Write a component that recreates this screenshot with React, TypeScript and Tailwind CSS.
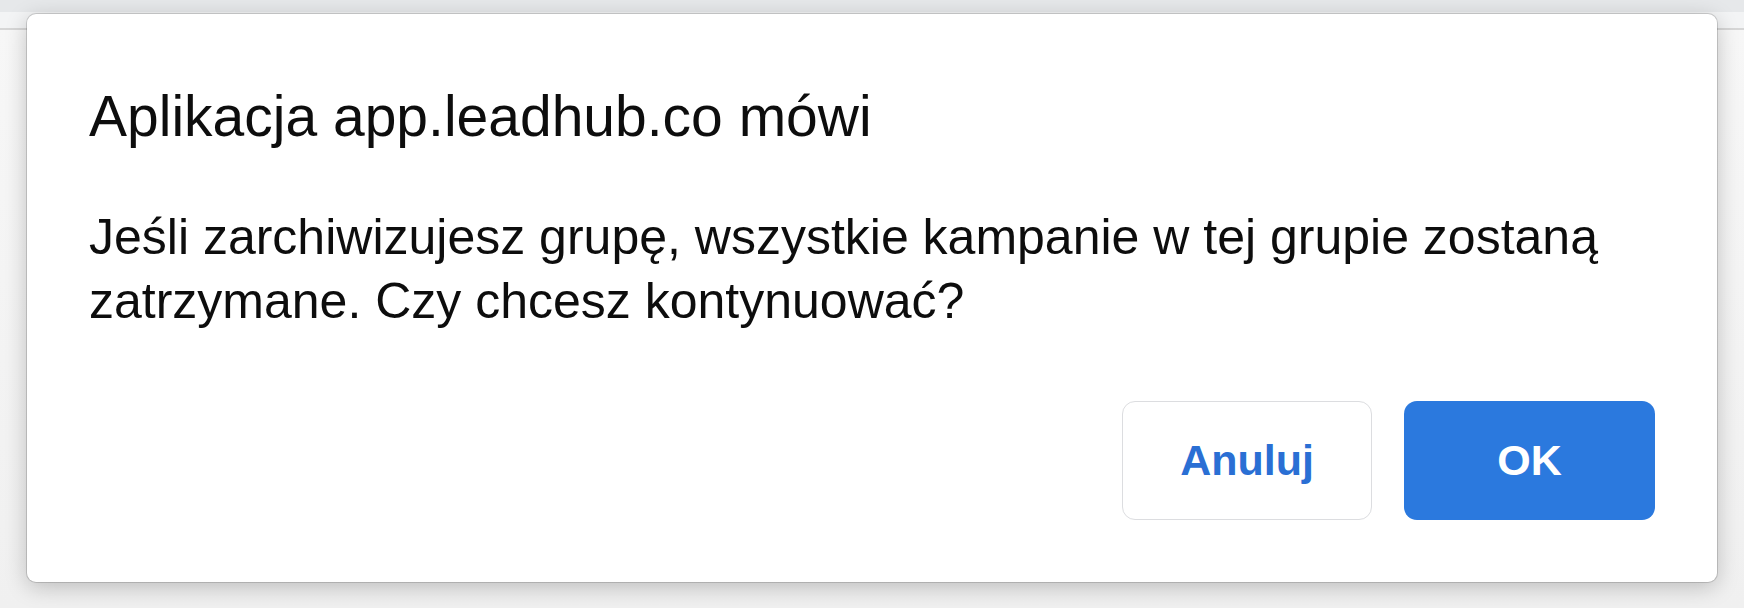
export default function App() {
  return (
    <div className="relative w-[1744px] h-[608px] overflow-hidden bg-[#f6f6f6] font-['Liberation_Sans',Arial,sans-serif]">
      {/* browser chrome behind the alert */}
      <div className="h-[12px] bg-[#e6e8ea]" />
      <div className="h-[16px] bg-[#f3f4f5]" />
      <div className="h-[2px] bg-[#d6d6d6]" />
      <div className="h-[578px] bg-gradient-to-b from-[#f7f7f7] to-[#f0f0f0]" />

      {/* alert dialog */}
      <div className="absolute left-[27px] top-[14px] w-[1690px] h-[568px] bg-white rounded-[9px] shadow-[0_0_0_1px_rgba(0,0,0,0.15),0_5px_22px_rgba(0,0,0,0.22)] flex flex-col pt-[68px] pb-[62px] px-[62px]">
        <h1 className="text-[57px] leading-[68px] text-[#0d0d0d] font-normal">
          Aplikacja app.leadhub.co mówi
        </h1>
        <p className="mt-[55px] text-[50px] leading-[64px] text-[#0d0d0d]">
          Jeśli zarchiwizujesz grupę, wszystkie kampanie w tej grupie zostaną zatrzymane. Czy chcesz kontynuować?
        </p>
        <div className="mt-auto flex justify-end gap-[32px]">
          <button className="w-[250px] h-[119px] rounded-[13px] border-[1.5px] border-[#dcdde0] bg-white text-[#2a6fd4] text-[43px] font-bold">
            Anuluj
          </button>
          <button className="w-[251px] h-[119px] rounded-[13px] bg-[#2b79de] text-white text-[43px] font-bold">
            OK
          </button>
        </div>
      </div>
    </div>
  );
}
